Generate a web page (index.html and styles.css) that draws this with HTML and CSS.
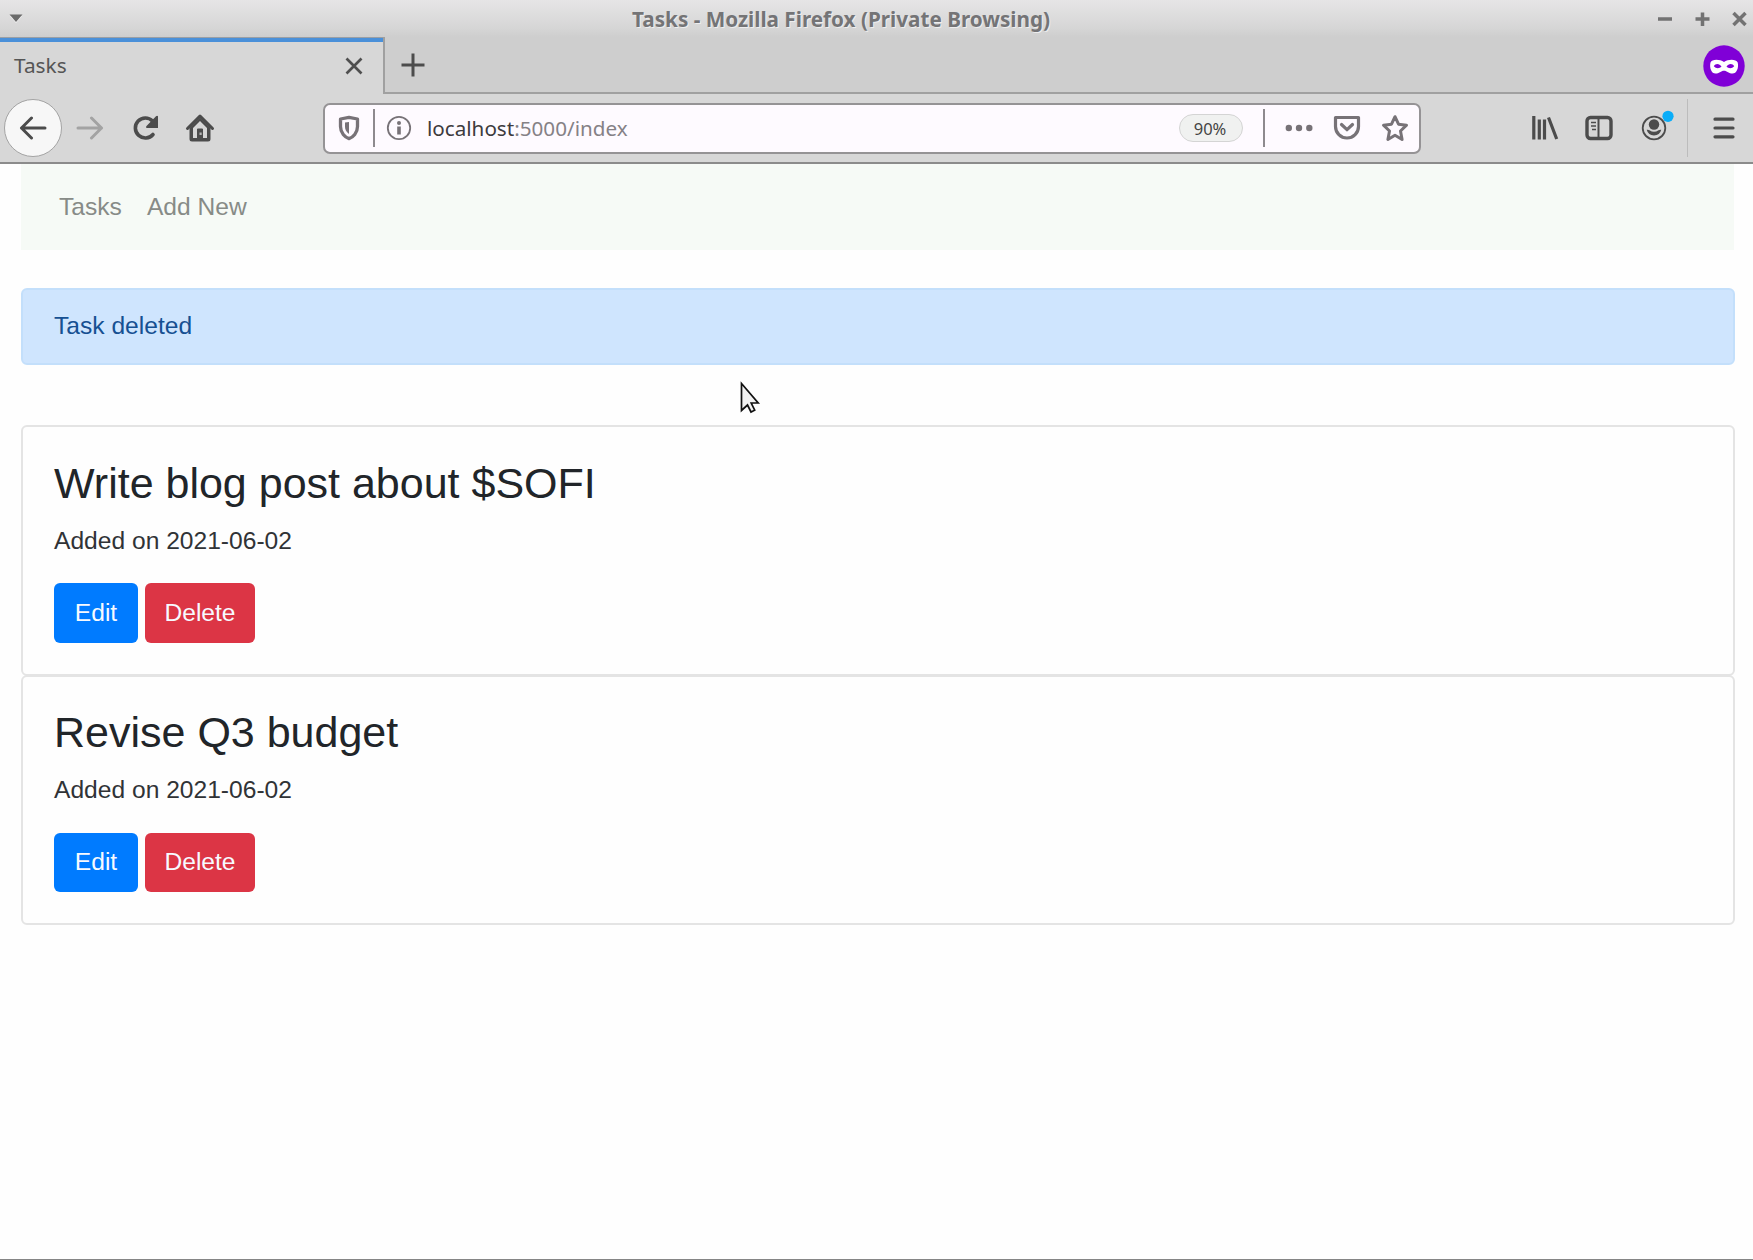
FILE: index.html
```html
<!DOCTYPE html>
<html lang="en">
<head>
<meta charset="utf-8">
<title>Tasks</title>
<link rel="stylesheet" href="styles.css">
</head>
<body>
<header class="titlebar">
  <svg class="window-menu" width="14" height="10" viewBox="0 0 14 10"><path d="M1 2h12L7 9z" fill="#fff" opacity=".7"/><path d="M.5 .5h13L7 8z" fill="#6b6b6b"/></svg>
  <span class="window-title">Tasks - Mozilla Firefox (Private Browsing)</span>
  <svg class="window-buttons" width="92" height="18" viewBox="0 0 92 18" fill="none" stroke="#727272" stroke-width="3.5"><path d="M1 9h14M38.500 9h14M45.500 2.500v13.500M76.500 3l12 12M88.500 3l-12 12"/></svg>
</header>
<div class="tabstrip">
  <div class="tab"><span>Tasks</span>
    <svg width="18" height="18" viewBox="0 0 18 18" fill="none" stroke="#4f4f4f" stroke-width="2.700"><path d="M1.500 1.500l15 15M16.500 1.500l-15 15"/></svg>
  </div>
  <svg class="new-tab" width="24" height="24" viewBox="0 0 24 24" fill="none" stroke="#4c4c4c" stroke-width="3"><path d="M12 0.500v23M0.500 12h23"/></svg>
  <svg class="private-badge" width="42" height="42" viewBox="0 0 42 42"><circle cx="21" cy="21" r="20.700" fill="#8000d7"/><path fill="#fff" d="M7.500 17.500C9 13.800 17 14.200 21 17C25 14.200 33 13.800 34.700 17.500C36 23 33.500 28.600 29.500 28.600C26 28.600 24 25.700 21 25.700S16 28.600 12.500 28.600C8.500 28.600 6.200 23 7.500 17.500z"/><path fill="#8000d7" d="M10.800 21.300C12.500 17.800 16.500 18.300 18.500 21.500C16.500 23.800 13 23.800 10.800 21.300zM31.200 21.300C29.500 17.800 25.500 18.300 23.500 21.500C25.500 23.800 29 23.800 31.200 21.300z"/></svg>
</div>
<div class="toolbar">
  <div class="back"><svg width="28" height="24" viewBox="0 0 28 24" fill="none" stroke="#4c4c4c" stroke-width="3" stroke-linecap="round" stroke-linejoin="round"><path d="M26 12H2.500M12.500 2L2.500 12l10 10"/></svg></div>
  <svg class="forward" width="28" height="24" viewBox="0 0 28 24" fill="none" stroke="#a3a3a3" stroke-width="3" stroke-linecap="round" stroke-linejoin="round"><path d="M2 12h23.500M15.500 2l10 10-10 10"/></svg>
  <svg class="reload" width="28" height="26" viewBox="0 0 28 26" fill="none" stroke="#4c4c4c" stroke-width="3.600"><path stroke-linecap="round" d="M21 19.500A10 10 0 1 1 20.500 6"/><path fill="#4c4c4c" stroke="none" d="M26 1.200v11.800H14.500q-1-1 0-2L24 1.200q1.200-.8 2 0z"/></svg>
  <svg class="home" width="30" height="30" viewBox="0 0 30 30"><path d="M15 3L2.500 15.500M15 3l12.500 12.500" fill="none" stroke="#4c4c4c" stroke-width="3" stroke-linecap="round"/><path fill-rule="evenodd" fill="#4c4c4c" d="M15 4.500L25.500 15v11q0 2.500-2.500 2.500H7q-2.500 0-2.500-2.500V15zM15 8l-7 7v10h4v-8.500q0-1 1-1h4q1 0 1 1V25h4V15z"/><path d="M12 16h6v10h-6z" fill="#4c4c4c"/><path d="M14.500 19.500h2.200v2.500h-2.200z" fill="#b5b5b5"/></svg>
  <div class="urlbar">
    <svg class="shield" width="22" height="26" viewBox="0 0 22 26"><path d="M11 2.300L19.500 4v7.500C19.500 18 15 22.500 11 23.700C7 22.500 2.500 18 2.500 11.500V4z" fill="none" stroke="#777277" stroke-width="3.300" stroke-linejoin="round"/><path d="M11 7v12C8 17 7 14 7 11.500V7.500z" fill="#777277"/></svg>
    <i class="url-separator"></i>
    <svg class="info" width="26" height="26" viewBox="0 0 26 26"><circle cx="13" cy="13" r="11.200" fill="none" stroke="#777277" stroke-width="1.800"/><circle cx="13" cy="8" r="2" fill="#777277"/><path d="M11.200 11.500h3.600v8h-3.600z" fill="#777277"/></svg>
    <span class="address"><b>localhost</b>:5000/index</span>
    <span class="zoom-level">90%</span>
    <i class="url-separator"></i>
    <svg class="dots" width="28" height="8" viewBox="0 0 28 8" fill="#777277"><circle cx="3.800" cy="4" r="3.200"/><circle cx="14" cy="4" r="3.200"/><circle cx="24.300" cy="4" r="3.200"/></svg>
    <svg class="pocket" width="28" height="26" viewBox="0 0 28 26" fill="none" stroke="#777277" stroke-width="3.200" stroke-linecap="round" stroke-linejoin="round"><path d="M2.500 2.500h23v9a11.500 11.500 0 0 1-23 0z"/><path d="M8.500 9.500l5.500 5.200 5.500-5.200"/></svg>
    <svg class="star" width="28" height="28" viewBox="0 0 28 28" fill="none" stroke="#777277" stroke-width="3" stroke-linejoin="round"><path d="M14 2.700l3.500 7.500 8 1-6 5.800 1.600 8.500-7.100-4.200-7.100 4.200 1.600-8.500-6-5.800 8-1z"/></svg>
  </div>
  <svg class="library" width="28" height="26" viewBox="0 0 28 26" fill="none" stroke="#4c4c4c" stroke-width="3.200"><path d="M2.800 1v23.500M8.300 4.500v20M13.500 4.500v20M17.500 2.500l8.200 21.500"/></svg>
  <svg class="sidebar-icon" width="28" height="26" viewBox="0 0 28 26" fill="none" stroke="#4c4c4c"><rect x="2" y="2.500" width="24" height="21" rx="3.500" stroke-width="3.400"/><path d="M13.500 2v22" stroke-width="2"/><path d="M6 7.500h5M6 11h5M7 14.500h4" stroke-width="1.500"/></svg>
  <svg class="account" width="34" height="32" viewBox="0 0 34 32"><circle cx="13" cy="18" r="11.300" fill="none" stroke="#4c4c4c" stroke-width="1.800"/><circle cx="13" cy="14.500" r="5.200" fill="#4c4c4c"/><path d="M5.700 19.800q1.500-.4 2.800.4q4.500 3 9 0q1.300-.8 2.800-.4q-1.500 5.700-7.300 5.700t-7.300-5.700z" fill="#4c4c4c"/><circle cx="27" cy="6.300" r="5.600" fill="#0aadf8"/></svg>
  <i class="menu-separator"></i>
  <svg class="menu" width="22" height="22" viewBox="0 0 22 22" fill="none" stroke="#4c4c4c" stroke-width="3.200" stroke-linecap="round"><path d="M2 2.200h18M2 11h18M2 19.800h18"/></svg>
</div>
<main class="page">
  <nav class="nav"><a>Tasks</a><a>Add New</a></nav>
  <div class="alert">Task deleted</div>
  <article class="card">
    <h2>Write blog post about $SOFI</h2>
    <p>Added on 2021-06-02</p>
    <div class="actions"><a class="btn edit">Edit</a><a class="btn delete">Delete</a></div>
  </article>
  <article class="card">
    <h2>Revise Q3 budget</h2>
    <p>Added on 2021-06-02</p>
    <div class="actions"><a class="btn edit">Edit</a><a class="btn delete">Delete</a></div>
  </article>
</main>
<svg class="cursor" width="22" height="34" viewBox="0 0 22 34"><path d="M1.500 2.500v27l6-5.500 3.500 7 3.700-1.800-3.500-7.200h7z" fill="#f2f2f2" stroke="#111" stroke-width="1.700"/></svg>
</body>
</html>
```
FILE: styles.css
```css
* { box-sizing: border-box; }
body {
  margin: 0;
  height: 1260px;
  display: flex;
  flex-direction: column;
  overflow: hidden;
  background: #fefefe;
  border-bottom: 1px solid #858585;
  font-family: "Liberation Sans", Arial, sans-serif;
}
svg { display: block; flex: none; }

.titlebar {
  height: 37px;
  flex: none;
  display: flex;
  align-items: center;
  padding: 0 4px 0 9px;
  background: linear-gradient(#e6e5e6, #d6d6d6 75%, #cecece);
  font-family: "Noto Sans", sans-serif;
}
.window-title {
  margin: 0 auto 0 609px;
  font-size: 20.700px;
  line-height: 30px;
  font-weight: 700;
  color: #747476;
  text-shadow: 1px 1px 0 #eee;
  white-space: nowrap;
}
.tabstrip {
  height: 57px;
  flex: none;
  display: flex;
  background: #cecece;
  box-shadow: inset 0 -2px #a0a0a0;
  font-family: "Noto Sans", sans-serif;
}
.tab {
  width: 385px;
  display: flex;
  align-items: center;
  justify-content: space-between;
  padding: 4px 20px 4px 14px;
  background: linear-gradient(#9a9fa5 1px, #4a90d9 1px, #4a90d9 5px, #d7d7d7 5px);
  border-right: 2px solid #a0a0a0;
  font-size: 20.800px;
  line-height: 28px;
  color: #555;
}
.tab span { margin-bottom: 1px; }
.new-tab { margin: 16px 0 0 16px; }
.private-badge { margin: 8px 8px 0 auto; }

.toolbar {
  height: 70px;
  flex: none;
  display: flex;
  align-items: center;
  padding-left: 4px;
  background: #d7d7d7;
  border-bottom: 2px solid #8b8b8b;
}
.back {
  width: 58px;
  height: 58px;
  display: grid;
  place-items: center;
  border: 1.5px solid #a3a3a3;
  border-radius: 50%;
  background: #f7f7f7;
}
.forward { margin-left: 14px; }
.reload { margin-left: 28px; }
.home { margin-left: 25px; }
.urlbar {
  width: 1098px;
  height: 51px;
  margin-left: 108px;
  display: flex;
  align-items: center;
  background: #fefaff;
  border: 2px solid #959395;
  border-radius: 7px;
}
.shield { margin-left: 13px; }
.url-separator { width: 2px; height: 38px; margin-left: 13px; background: #8e8a8e; }
.info { margin-left: 11px; }
.address {
  margin: 0 0 1px 15px;
  font: 20.650px/30px "Noto Sans", sans-serif;
  color: #858186;
  white-space: nowrap;
}
.address b { font-weight: 400; color: #3d3b3e; }
.zoom-level {
  width: 64px;
  height: 28px;
  margin: 0 7px 0 auto;
  padding-right: 2px;
  border: 1.5px solid #d4d4d4;
  border-radius: 14px;
  background: #f0f1f0;
  font: 16.500px/27px "Noto Sans", sans-serif;
  color: #444;
  text-align: center;
}
.dots { margin-left: 20px; }
.pocket { margin-left: 20px; }
.star { margin: 0 10px 0 20px; }
.library { margin-left: 110px; }
.sidebar-icon { margin-left: 26px; }
.account { margin: 0 0 5px 28px; }
.menu-separator { width: 1px; height: 58px; margin-left: 12px; background: #bcbcbc; }
.menu { margin-left: 25px; }

.page { padding: 0 18px 0 21px; color: #212529; font-size: 24.600px; }
.nav {
  height: 86px;
  margin-right: 1px;
  display: flex;
  gap: 25px;
  padding: 25px 38px;
  line-height: 36px;
  color: #878b87;
  background: #f6faf6;
}
.alert {
  height: 77px;
  margin: 38px 0 60px;
  padding: 17px 31px;
  line-height: 38px;
  color: #165092;
  background: #cfe5fe;
  border: 2px solid #c3dffb;
  border-radius: 6px;
}
.card {
  height: 251px;
  margin-bottom: -1px;
  padding: 29px 31px 0;
  border: 2px solid #e4e4e4;
  border-radius: 6px;
}
.card + .card { height: 250px; padding-top: 28px; }
.card h2 { margin: 0; font-size: 43px; line-height: 54px; font-weight: 400; }
.card p { margin: 13px 0 24px; line-height: 36px; color: #303336; }
.card + .card p { margin-bottom: 25px; }
.actions { display: flex; gap: 7px; }
.btn { height: 59px; line-height: 58px; text-align: center; color: #f7faff; border-radius: 6px; }
.card:first-of-type .btn { height: 60px; line-height: 60px; }
.edit { width: 84px; background: #007bff; }
.delete { width: 110px; background: #dc3545; }
.cursor { position: absolute; left: 740px; top: 381px; }
```
